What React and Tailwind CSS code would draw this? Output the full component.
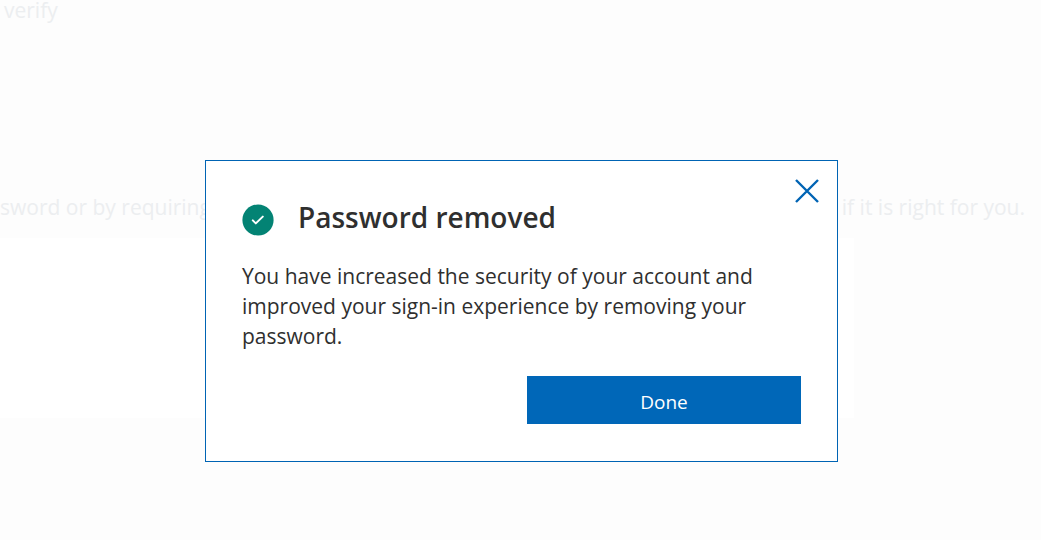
import { useState } from 'react';

function CheckBadge() {
  return (
    <svg className="size-8 shrink-0" viewBox="0 0 32 32" fill="none" aria-hidden="true">
      <circle cx="16" cy="16" r="15.6" fill="#038374" />
      <path
        d="M10.8 16.4l3 3 7-6.8"
        stroke="white"
        strokeWidth="2"
        strokeLinecap="round"
        strokeLinejoin="round"
      />
    </svg>
  );
}

function CloseIcon() {
  return (
    <svg className="size-6" viewBox="0 0 24 24" fill="none" aria-hidden="true">
      <path d="M1 1l22 22M23 1L1 23" stroke="#0064b4" strokeWidth="2.4" />
    </svg>
  );
}

function PageBehind() {
  return (
    <main className="min-h-screen bg-[#fdfdfd] text-[21px] leading-[30px] text-[#eceef0]">
      <p className="h-47 pl-1 leading-5">verify</p>
      <div className="flex justify-between pt-1 pr-4">
        <span>sword or by requiring</span>
        <span>if it is right for you.</span>
      </div>
      <div className="mt-4 h-[180px] w-[82%] bg-white" />
    </main>
  );
}

export default function App() {
  const [open, setOpen] = useState(true);

  return (
    <div className="relative font-['Open_Sans','Noto_Sans',sans-serif]">
      <PageBehind />
      {open && (
        <div className="absolute inset-0 flex items-start justify-center pt-40 pr-4 pl-[18px]">
          <div
            role="dialog"
            aria-modal="true"
            aria-labelledby="dialog-title"
            aria-describedby="dialog-text"
            className="relative w-full max-w-[633px] border border-[#0064b4] bg-white px-9 pt-[38px] pb-[37px] text-[#2f2f2f]"
          >
            <button
              type="button"
              aria-label="Close"
              onClick={() => setOpen(false)}
              className="absolute top-[18px] right-[18px] cursor-pointer"
            >
              <CloseIcon />
            </button>
            <div className="flex items-center gap-6">
              <CheckBadge />
              <h1 id="dialog-title" className="pb-1.5 text-[28px] leading-9 font-semibold">
                Password removed
              </h1>
            </div>
            <p id="dialog-text" className="mt-5 text-[21px] leading-[30px]">
              You have increased the security of your account and improved your sign-in experience by
              removing your password.
            </p>
            <div className="mt-[25px] flex justify-end">
              <button
                type="button"
                onClick={() => setOpen(false)}
                className="h-12 w-[274px] cursor-pointer bg-[#0067b8] pt-1 text-[19px] text-white"
              >
                Done
              </button>
            </div>
          </div>
        </div>
      )}
    </div>
  );
}
